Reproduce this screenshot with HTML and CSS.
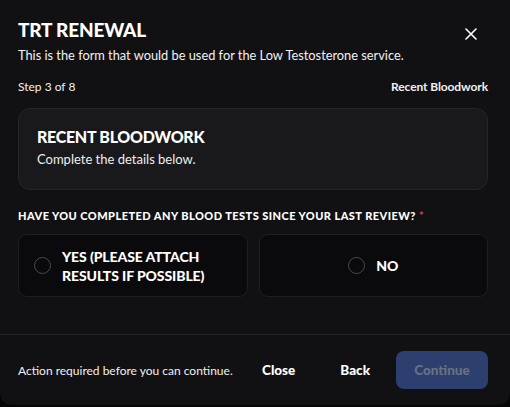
FILE: index.html
```html
<!DOCTYPE html>
<html>
<head>
<meta charset="utf-8">
<link rel="stylesheet" href="styles.css">
</head>
<body>
<div class="dialog">
  <div class="header">
    <div class="titles">
      <h1 class="title">TRT RENEWAL</h1>
      <p class="subtitle">This is the form that would be used for the Low Testosterone service.</p>
    </div>
    <button class="close-x" aria-label="Close">
      <svg width="12" height="12" viewBox="0 0 12 12"><path d="M1 1L11 11M11 1L1 11" stroke="#fff" stroke-width="1.6" stroke-linecap="round"/></svg>
    </button>
  </div>
  <div class="steps">
    <span>Step 3 of 8</span>
    <span class="step-name">Recent Bloodwork</span>
  </div>
  <div class="card">
    <h2 class="card-title">RECENT BLOODWORK</h2>
    <p class="card-sub">Complete the details below.</p>
  </div>
  <div class="question">HAVE YOU COMPLETED ANY BLOOD TESTS SINCE YOUR LAST REVIEW? <span class="req">*</span></div>
  <div class="options">
    <label class="option">
      <span class="radio"></span>
      <span class="opt-text">YES (PLEASE ATTACH<br>RESULTS IF POSSIBLE)</span>
    </label>
    <label class="option center">
      <span class="radio"></span>
      <span class="opt-text">NO</span>
    </label>
  </div>
  <div class="footer">
    <span class="notice">Action required before you can continue.</span>
    <div class="actions">
      <button class="btn-text close">Close</button>
      <button class="btn-text back">Back</button>
      <button class="btn-primary">Continue</button>
    </div>
  </div>
</div>
</body>
</html>
```

FILE: styles.css
```css
html, body {
  margin: 0;
  padding: 0;
  background: #050505;
}
body {
  font-family: "Lato", "Noto Sans", sans-serif;
  color: #fff;
  width: 510px;
  height: 407px;
  overflow: hidden;
}
.dialog {
  width: 510px;
  height: 405px;
  background: #111113;
  border-radius: 0 0 12px 12px;
  box-sizing: border-box;
  display: flex;
  flex-direction: column;
}
.header {
  display: flex;
  justify-content: space-between;
  align-items: flex-start;
  padding: 18px 33px 0 18px;
}
.title {
  margin: 0;
  font-size: 19px;
  font-weight: 900;
  letter-spacing: -0.2px;
  line-height: 24px;
}
.subtitle {
  margin: 5px 0 0;
  font-size: 12.8px;
  line-height: 16px;
  color: #f2f2f2;
}
.close-x {
  background: none;
  border: 0;
  padding: 0;
  margin-top: 10px;
  width: 12px;
  height: 12px;
  display: flex;
}
.steps {
  display: flex;
  justify-content: space-between;
  padding: 0 22px 0 18px;
  margin-top: 17px;
  font-size: 12px;
  line-height: 14px;
  color: #f0f0f0;
}
.step-name {
  font-weight: 700;
  letter-spacing: -0.1px;
}
.card {
  margin: 14px 22px 0 18px;
  height: 82px;
  box-sizing: border-box;
  background: #19191b;
  border: 1px solid #252527;
  border-radius: 12px;
  padding: 18px 18px;
}
.card-title {
  margin: 0;
  font-size: 16px;
  font-weight: 900;
  letter-spacing: -0.3px;
  line-height: 20px;
}
.card-sub {
  margin: 5px 0 0;
  font-size: 13px;
  line-height: 15px;
  color: #eee;
}
.question {
  margin: 19px 18px 0;
  font-size: 11px;
  font-weight: 900;
  letter-spacing: 0.45px;
  line-height: 14px;
}
.req {
  color: #e0343b;
}
.options {
  display: grid;
  grid-template-columns: 1fr 1fr;
  gap: 11px;
  margin: 11px 22px 0 18px;
}
.option {
  height: 63px;
  box-sizing: border-box;
  background: #0a0a0c;
  border: 1px solid #1e1e21;
  border-radius: 9px;
  display: flex;
  align-items: center;
  gap: 11px;
  padding: 0 15px;
}
.option.center {
  justify-content: center;
}
.radio {
  width: 15px;
  height: 15px;
  border: 1px solid #4a4a4e;
  border-radius: 50%;
  flex: none;
}
.opt-text {
  font-size: 14px;
  font-weight: 900;
  line-height: 19px;
  letter-spacing: -0.1px;
}
.footer {
  margin-top: auto;
  border-top: 1px solid #232326;
  height: 70px;
  display: flex;
  align-items: center;
  justify-content: space-between;
  padding: 0 22px 0 18px;
}
.notice {
  font-size: 12px;
  color: #f0f0f0;
}
.actions {
  display: flex;
  align-items: center;
}
.btn-text {
  background: none;
  border: 0;
  color: #fff;
  font-family: inherit;
  font-size: 13.5px;
  font-weight: 900;
  padding: 0;
}
.btn-text.close {
  margin-right: 45px;
}
.btn-text.back {
  margin-right: 26px;
}
.btn-primary {
  background: #2c3f6e;
  border: 0;
  border-radius: 8px;
  width: 92px;
  height: 38px;
  color: #6a7080;
  font-family: inherit;
  font-size: 13.5px;
  font-weight: 900;
}
```
